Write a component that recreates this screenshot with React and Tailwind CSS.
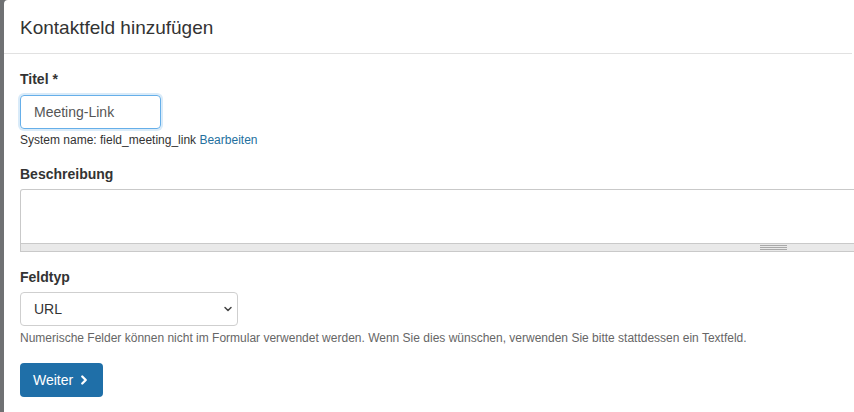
import { ChevronDown, ChevronRight } from "lucide-react";

export default function App() {
  return (
    <div className="flex h-[412px] w-[854px] overflow-hidden bg-[#6f7173] font-['Liberation_Sans',Arial,sans-serif] text-[#333]">
      {/* left backdrop strip */}
      <div className="w-[4px] shrink-0" />

      {/* modal */}
      <div className="flex flex-1 flex-col rounded-tl-[4px] bg-white">
        {/* header */}
        <div className="mr-[2px] flex h-[54px] items-center border-b border-[#e1e1e1] px-[16px] pt-[1px]">
          <h1 className="text-[19px] font-normal leading-none text-[#333]">Kontaktfeld hinzufügen</h1>
        </div>

        <div className="flex flex-col px-[16px] pt-[17px]">
          {/* Titel */}
          <label className="text-[14px] font-bold leading-[16px]">Titel *</label>
          <input
            defaultValue="Meeting-Link"
            className="mt-[8px] h-[34px] w-[141px] rounded-[4px] border border-[#66afe9] px-[13px] text-[14px] text-[#555] shadow-[0_0_0_2px_rgba(102,175,233,0.25)] outline-none"
          />
          <p className="mt-[3px] text-[12px] leading-[16px] text-[#333]">
            System name: field_meeting_link{" "}
            <a className="text-[#23709e]">Bearbeiten</a>
          </p>

          {/* Beschreibung */}
          <label className="mt-[18px] text-[14px] font-bold leading-[16px]">Beschreibung</label>
          <div className="-mr-[20px] mt-[7px] flex flex-col">
            <div className="h-[54px] rounded-tl-[3px] border border-b-0 border-[#c9c9c9] bg-white" />
            <div className="flex h-[9px] items-center border border-[#c9c9c9] bg-[#e9e9e9] pl-[739px]">
              <div className="flex w-[27px] flex-col gap-[1px]">
                <div className="h-px bg-[#a9a9a9]" />
                <div className="h-px bg-[#a9a9a9]" />
                <div className="h-px bg-[#a9a9a9]" />
              </div>
            </div>
          </div>

          {/* Feldtyp */}
          <label className="mt-[17px] text-[14px] font-bold leading-[16px]">Feldtyp</label>
          <div className="mt-[7px] flex h-[34px] w-[218px] items-center justify-between rounded-[4px] border border-[#cfcfcf] pl-[13px] pr-[3px] text-[14px] text-[#333]">
            <span>URL</span>
            <ChevronDown className="h-[12px] w-[12px] text-[#444]" strokeWidth={3} />
          </div>
          <p className="mt-[4px] text-[12px] leading-[16px] text-[#666]">
            Numerische Felder können nicht im Formular verwendet werden. Wenn Sie dies wünschen, verwenden Sie bitte stattdessen ein Textfeld.
          </p>

          {/* button */}
          <div className="mt-[17px]">
            <button className="flex h-[34px] items-center gap-[4px] rounded-[4px] bg-[#1f6fa8] pl-[13px] pr-[12px] text-[14px] text-white">
              Weiter
              <ChevronRight className="h-[14px] w-[14px]" strokeWidth={4} />
            </button>
          </div>
        </div>
      </div>
    </div>
  );
}
